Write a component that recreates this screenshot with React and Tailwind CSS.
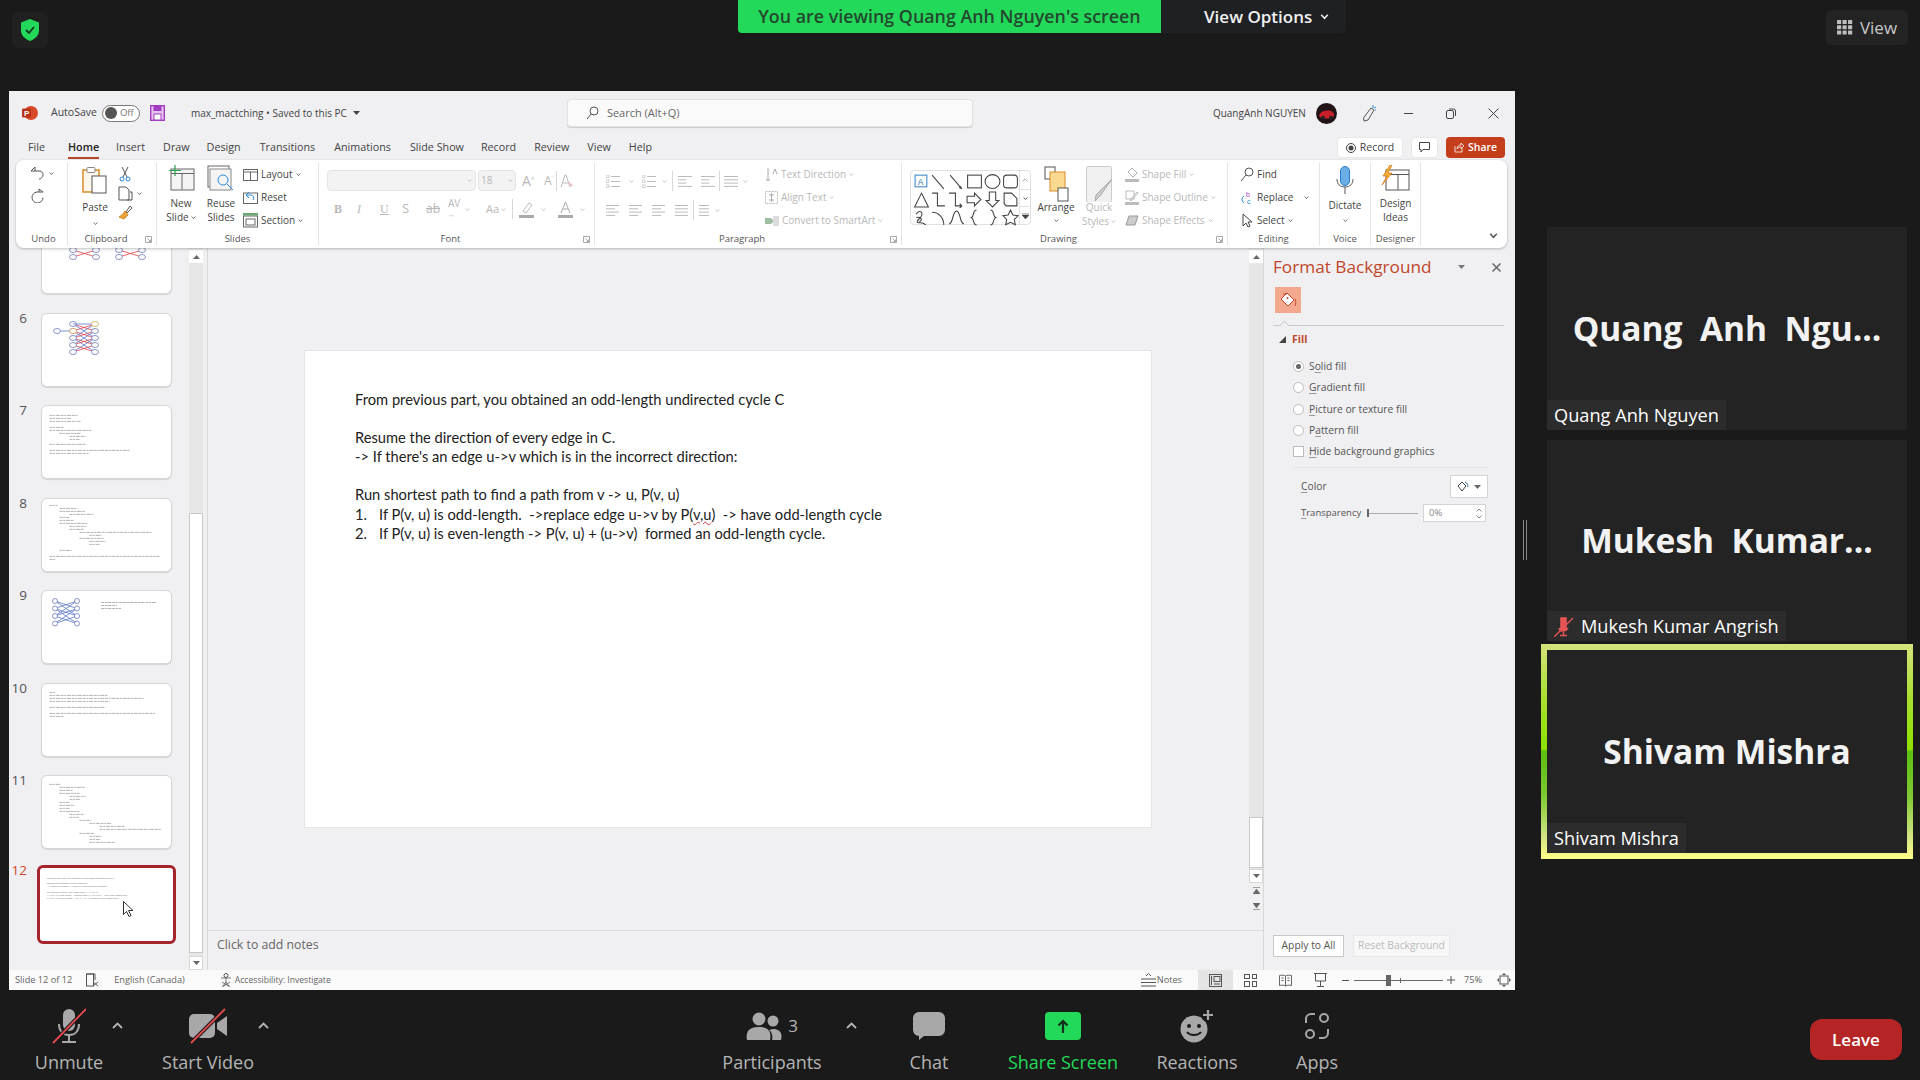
import React from 'react';

const F = "font-['Open_Sans','Noto_Sans',sans-serif]";

const Svg = ({ w, h, vb, className = '', children, ...rest }) => (
  <svg width={w} height={h} viewBox={vb || `0 0 ${w} ${h}`} fill="none" className={'shrink-0 ' + className} {...rest}>{children}</svg>
);
const Chev = ({ c = '#555', s = 6, className = '' }) => (
  <Svg w={s} h={s} vb="0 0 6 6" className={className}><path d="M.8 1.8 3 4.2l2.2-2.4" stroke={c} strokeWidth="1" /></Svg>
);
const Tri = ({ c = '#666', className = '' }) => (
  <Svg w={7} h={4} className={className}><path d="M0 0h7L3.5 4z" fill={c} /></Svg>
);

/* ---------- top bar ---------- */
const TopBar = () => (
  <div className="h-[91px] flex items-start">
    <div className="ml-3 mt-3 w-9 h-9 rounded-md bg-[#202020] flex items-center justify-center">
      <Svg w={18} h={22}>
        <path d="M9 0 18 3.5v8c0 5-4 8.500-9 10.500C4 20 0 16.500 0 11.500v-8z" fill="#23d959" />
        <path d="m5 11 3 3 5-6" stroke="#14351f" strokeWidth="1.800" />
      </Svg>
    </div>
    <div className="ml-[690px] h-[33px] w-[423px] bg-[#23d959] rounded-bl-sm flex items-center justify-center text-[17.850px] font-semibold text-[#24482f] whitespace-nowrap">
      You are viewing Quang Anh Nguyen's screen
    </div>
    <div className="h-[33px] w-[185px] bg-[#1f2023] rounded-br-sm flex items-center pl-[43px] gap-2 text-[17px] font-semibold text-[#f0f0f0] whitespace-nowrap">
      View Options
      <Chev c="#f0f0f0" s={9} />
    </div>
    <div className="ml-auto mr-3 mt-[10px] w-[82px] h-[35px] rounded-md bg-[#232323] flex items-center justify-center gap-[7px] text-[17px] text-[#c8c8c8]">
      <Svg w={16} h={15}>
        {[0, 5.500, 11].map(x => [0, 5.250, 10.500].map(y => <rect key={x + '-' + y} x={x} y={y} width="4.200" height="4" rx=".6" fill="#bdbdbd" />))}
      </Svg>
      View
    </div>
  </div>
);

/* ---------- title bar ---------- */
const TitleBar = () => (
  <div className="h-[44px] flex items-center text-[10px] text-[#444] whitespace-nowrap">
    <Svg w={16} h={16} className="ml-[13px]">
      <circle cx="9" cy="8" r="7" fill="#d8492a" />
      <rect x="0" y="3.500" width="9" height="9" rx="1" fill="#b7341a" />
      <text x="2" y="11" fontSize="8" fontWeight="700" fill="#fff" fontFamily="Liberation Sans">P</text>
    </Svg>
    <span className="ml-[13px] text-[10.500px]">AutoSave</span>
    <div className="ml-[5px] w-[38px] h-[17px] rounded-full border border-[#777] flex items-center pl-[2px] gap-[3px] bg-white text-[9.500px] text-[#777]">
      <div className="w-[12px] h-[12px] rounded-full bg-[#555]" />Off
    </div>
    <Svg w={15} h={16} className="ml-[10px]">
      <rect x=".7" y=".7" width="13.600" height="14.600" fill="#e6c4ef" stroke="#a23cc0" strokeWidth="1.400" />
      <rect x="3.500" y="1" width="8" height="5" fill="#a23cc0" />
      <rect x="4" y="9" width="7" height="6" fill="#fff" stroke="#a23cc0" />
    </Svg>
    <span className="ml-[26px]">max_mactching • Saved to this PC</span>
    <Tri c="#444" className="ml-[6px]" />
    <div className="ml-[207px] w-[406px] h-[28px] rounded bg-[#fafafa] border border-[#e2e2e2] shadow-[0_1px_1px_rgba(0,0,0,.15)] flex items-center pl-[18px] gap-[8px] text-[#666] text-[11px]">
      <Svg w={13} h={14}>
        <circle cx="8" cy="5" r="4" stroke="#555" />
        <path d="M5 8 1 13" stroke="#555" />
      </Svg>
      Search (Alt+Q)
    </div>
    <span className="ml-[240px]">QuangAnh NGUYEN</span>
    <Svg w={21} h={21} className="ml-[10px]">
      <circle cx="10.500" cy="10.500" r="10.500" fill="#231517" />
      <path d="M3 12c2-4 6-5 10-4.500 3 .5 5 2 5 4.500s-3 3.500-7 3.500-7 0-8-3.500" fill="#c7202a" />
      <circle cx="7" cy="14.500" r="1.800" fill="#222" />
      <circle cx="15" cy="14.500" r="1.800" fill="#222" />
    </Svg>
    <Svg w={15} h={18} className="ml-[25px]">
      <path d="M9 4 12 6 6 16l-4 1-.5-3z" stroke="#555" />
      <path d="M11 1v3M14 3l-2 1M14 6h-1" stroke="#2b88d8" />
    </Svg>
    <div className="ml-[27px] w-[9px] h-px bg-[#444]" />
    <Svg w={10} h={11} className="ml-[33px]">
      <rect x=".5" y="2.500" width="7" height="8" rx="1.500" stroke="#444" />
      <path d="M3 1h4.500A2 2 0 0 1 9.500 3v5" stroke="#444" />
    </Svg>
    <Svg w={11} h={11} className="ml-[32px]"><path d="m.5.5 10 10m0-10-10 10" stroke="#444" /></Svg>
  </div>
);

/* ---------- tabs ---------- */
const tabs = [['File', 19], ['Home', 23], ['Insert', 17], ['Draw', 18], ['Design', 17], ['Transitions', 19], ['Animations', 19], ['Slide Show', 19], ['Record', 17], ['Review', 18], ['View', 18], ['Help', 18]];
const TabsRow = () => (
  <div className="h-[25px] flex items-center text-[10.750px] text-[#444] whitespace-nowrap">
    {tabs.map(([t, m]) => (
      <div key={t} style={{ marginLeft: m }} className={t === 'Home' ? 'relative h-full flex items-center text-[#222] font-semibold' : ''}>
        {t}
        {t === 'Home' && <div className="absolute left-0 right-0 bottom-[1px] h-[2px] bg-[#b7472a]" />}
      </div>
    ))}
    <div className="ml-auto h-[21px] w-[66px] bg-white rounded border border-[#e8e8e8] flex items-center justify-center gap-[4px] text-[10.500px]">
      <Svg w={10} h={10}><circle cx="5" cy="5" r="4.500" stroke="#444" /><circle cx="5" cy="5" r="2.500" fill="#444" /></Svg>
      Record
    </div>
    <div className="ml-[8px] w-[27px] h-[21px] bg-white rounded border border-[#e8e8e8] flex items-center justify-center">
      <Svg w={11} h={11}><path d="M.5.5h10v7H4L2 10V7.500H.5z" stroke="#444" /></Svg>
    </div>
    <div className="ml-[8px] mr-[10px] w-[59px] h-[21px] bg-[#c43e1c] rounded flex items-center justify-center gap-[4px] text-[10.500px] font-semibold text-white">
      <Svg w={10} h={11}><path d="M1 4v6h7V6M3 7c0-3 2-4 4-4V1l3 3-3 2.500V5C5 5 4 6 3 7" stroke="#fff" strokeWidth=".8" /></Svg>
      Share
    </div>
  </div>
);

/* ---------- ribbon ---------- */
const launcher = (
  <Svg w={7} h={7} className="absolute right-[4px] top-[3px]">
    <path d="M.5.5h6v6h-6zM2.500 2.500l3 3M5.500 3.500v2h-2" stroke="#888" strokeWidth=".7" />
  </Svg>
);
const Group = ({ w, label, launch, pr = 0, pl = 0, children }) => (
  <div style={{ width: w }} className="h-[82px] mt-[3px] flex flex-col border-r border-[#e3e3e3]">
    <div className="h-[70px] flex">{children}</div>
    <div style={{ paddingRight: pr, paddingLeft: pl }} className="h-[12px] relative flex items-center justify-center text-[9.500px] text-[#555] whitespace-nowrap">
      {label}
      {launch && launcher}
    </div>
  </div>
);
const Row = ({ icon, text, off, chev = true }) => (
  <div className={`h-[23px] flex items-center gap-[3px] whitespace-nowrap text-[10px] ${off ? 'text-[#b8b8b8]' : 'text-[#444]'}`}>
    {icon}
    <span>{text}</span>
    {chev && <Chev c={off ? '#b8b8b8' : '#555'} s={5} />}
  </div>
);
const Lines = ({ c = '#bbb', w = 14, n = 3, sh = [1, 1, 1, 1] }) => (
  <Svg w={w} h={11}>
    {Array.from({ length: n + 1 }).map((_, i) => <rect key={i} x="0" y={i * 3.300} width={w * sh[i]} height="1" fill={c} />)}
  </Svg>
);
const Bullets = ({ c = '#bbb' }) => (
  <Svg w={14} h={13}>
    {[1, 6, 11].map(y => <g key={y}><rect x="0" y={y - 1} width="3" height="2.500" stroke={c} strokeWidth=".7" /><rect x="5" y={y} width="9" height="1" fill={c} /></g>)}
  </Svg>
);
const Sep = ({ h = 20, m = 6 }) => <div style={{ height: h, marginLeft: m, marginRight: m }} className="w-px bg-[#d8d8d8]" />;

const shapes = [
  <g><rect x="2" y="2" width="11" height="11" stroke="#3a86c8" /><text x="4.500" y="11" fontSize="8" fill="#2b6fa8" fontFamily="Liberation Sans">A</text></g>,
  <path d="m2 2 11 13" stroke="#444" />,
  <g><path d="m2 2 11 13" stroke="#444" /><path d="m13 15-3-1 2-2z" fill="#444" /></g>,
  <rect x="1.500" y="2" width="13" height="12" stroke="#444" />,
  <ellipse cx="8" cy="8" rx="7" ry="6.500" stroke="#444" />,
  <rect x="1.500" y="2" width="13" height="12" rx="3" stroke="#444" />,
  <path d="M8 2 1.500 15h13z" stroke="#444" />,
  <path d="M2 2h5v12h7" stroke="#444" />,
  <path d="M1 2h6v12h6m-2-2 2 2-2 2" stroke="#444" />,
  <path d="M1 5h7V2l6 6-6 6v-3H1z" stroke="#444" />,
  <path d="M5 1h6v8h3l-6 6-6-6h3z" stroke="#444" />,
  <path d="M2 2h7l5 5v7H4l-2-2z" stroke="#444" />,
  <path d="M3 5c3-5 8-2 4 3-3 3-5 5 0 5 2 0 4 1 5 2M3 8c4-1 7 2 3 4" stroke="#444" />,
  <path d="M2 3c6 0 11 5 11 12" stroke="#444" />,
  <path d="M1 14C5 14 4 2 8 2s3 12 7 12" stroke="#444" />,
  <path d="M10 1C6 1 8 7 5 8c3 1 1 7 5 7" stroke="#444" />,
  <path d="M6 1c4 0 2 6 5 7-3 1-1 7-5 7" stroke="#444" />,
  <path d="m8 1 2.200 4.600 5 .7-3.600 3.500.9 5L8 12.500l-4.500 2.300.9-5L.8 6.300l5-.7z" stroke="#444" />,
];

const Ribbon = () => (
  <div className="ml-[7px] w-[1491px] h-[88px] bg-white rounded-lg shadow-[0_1px_3px_rgba(0,0,0,.25)] flex relative z-10">
    <Group w={52} label="Undo" pl={4}>
      <div className="pl-[14px] pt-[3px] flex flex-col gap-[8px]">
        <div className="flex items-center gap-[4px]">
          <Svg w={15} h={14}><path d="M5 1 1 5h8c3 0 4 2 4 4s-2 4-4 4M5 1v4" stroke="#555" /></Svg><Chev s={5} />
        </div>
        <Svg w={15} h={15}><path d="M9 1 13 4H7a5.500 5.500 0 1 0 6 5.500M9 1v3" stroke="#555" /></Svg>
      </div>
    </Group>
    <Group w={89} label="Clipboard" launch pr={12}>
      <div className="pl-[14px] w-[40px] flex flex-col items-center text-[10px] text-[#444]">
        <Svg w={26} h={28} className="mt-[3px]">
          <rect x="1" y="4" width="16" height="22" stroke="#d98b2b" strokeWidth="1.500" fill="#fdf6ea" />
          <rect x="5" y="1.500" width="8" height="5" rx="1" stroke="#888" fill="#fff" />
          <rect x="10" y="10" width="14" height="17" stroke="#555" fill="#fff" />
        </Svg>
        <span className="mt-[6px]">Paste</span>
        <Chev s={5} className="mt-[6px]" />
      </div>
      <div className="ml-[10px] pt-[3px] flex flex-col gap-[4px]">
        <Svg w={12} h={16} className="ml-[1px]"><path d="M3 1l5 10M9 1 4 11" stroke="#555" /><circle cx="3" cy="13" r="2" stroke="#2b88d8" /><circle cx="9" cy="13" r="2" stroke="#2b88d8" /></Svg>
        <div className="flex items-center gap-[4px]">
          <Svg w={15} h={15}><path d="M1 1h7l3 3v10H1z" stroke="#555" /><path d="M12 6h2v8H9" stroke="#555" /></Svg><Chev s={5} />
        </div>
        <Svg w={15} h={15}><path d="m8 7 4-6 2 2-5 5z" stroke="#555" /><path d="m7 6 3 4-4 4-5-2c2-1 4-3 6-6" fill="#eda33a" stroke="#d98b2b" /></Svg>
      </div>
    </Group>
    <Group w={162} label="Slides">
      <div className="ml-[8px] w-[32px] flex flex-col items-center text-[10px] text-[#444] leading-[14px]">
        <Svg w={27} h={26} className="mt-[2px]">
          <rect x="3" y="4" width="23" height="21" stroke="#666" fill="#f4f4f4" />
          <path d="M3 8.500h23M14 8.500v16" stroke="#666" />
          <path d="M7 0v11M1 5.500h12" stroke="#2da54a" strokeWidth="1.200" />
        </Svg>
        <span className="mt-[5px]">New</span>
        <div className="flex items-center gap-[2px]">Slide<Chev s={5} /></div>
      </div>
      <div className="ml-[8px] w-[32px] flex flex-col items-center text-[10px] text-[#444] leading-[14px]">
        <Svg w={28} h={26} className="mt-[2px]">
          <rect x="1" y="1" width="21" height="21" stroke="#666" fill="#fff" />
          <rect x="3" y="4" width="21" height="21" stroke="#888" fill="#f4f4f4" />
          <circle cx="16" cy="15" r="5" stroke="#2b88d8" />
          <path d="m20 19 6 6" stroke="#2b88d8" />
        </Svg>
        <span className="mt-[5px]">Reuse</span>
        <span>Slides</span>
      </div>
      <div className="ml-[6px]">
        <Row text="Layout" icon={<Svg w={15} h={12}><rect x=".5" y=".5" width="14" height="11" stroke="#666" /><path d="M.5 3h14M7.500 3v8" stroke="#666" /></Svg>} />
        <Row text="Reset" chev={false} icon={<Svg w={15} h={13}><rect x=".5" y="2" width="14" height="10.500" stroke="#666" /><path d="M6 1 3 4l3 3M3 4h5a3 3 0 0 1 2 5" stroke="#2b88d8" /></Svg>} />
        <Row text="Section" icon={<Svg w={15} h={15}><rect x=".5" y="3" width="14" height="11" stroke="#666" /><rect x="0" y="0" width="15" height="2.500" fill="#6aa874" /><rect x="3" y="6" width="9" height="6" stroke="#666" /></Svg>} />
      </div>
    </Group>
    <Group w={276} label="Font" launch pr={12}>
      <div className="pl-[8px] pt-[7px] text-[#b8b8b8]">
        <div className="flex items-center">
          <div className="w-[149px] h-[21px] bg-[#f3f3f3] border border-[#e4e4e4] rounded flex items-center justify-end pr-[3px]"><Chev c="#bbb" s={5} /></div>
          <div className="ml-[2px] w-[38px] h-[21px] bg-[#f3f3f3] border border-[#e4e4e4] rounded flex items-center justify-between px-[2px] text-[10px]">18<Chev c="#bbb" s={5} /></div>
          <span className="ml-[6px] text-[14px] leading-none">A<sup className="text-[7px]">^</sup></span>
          <span className="ml-[9px] text-[12px] leading-none">A<sup className="text-[7px]">˅</sup></span>
          <Sep m={3} />
          <Svg w={15} h={15}><path d="M1 14 5 2h1l4 12M3 10h5" stroke="#bbb" /><path d="m9 9 4 3-2 2-3-3z" fill="#e6c6c6" /></Svg>
        </div>
        <div className="flex items-center mt-[8px] text-[12px] h-[20px] pl-[7px]">
          <b className="w-[23px] font-['Liberation_Serif',serif]">B</b>
          <i className="w-[23px] font-['Liberation_Serif',serif]">I</i>
          <u className="w-[22px] font-['Liberation_Serif',serif]">U</u>
          <span className="w-[24px] text-[13px]">S</span>
          <s className="w-[22px]">ab</s>
          <span className="text-[10px] leading-[10px] w-[17px]">AV<br /><span className="text-[7px]">↔</span></span>
          <Chev c="#bbb" s={5} />
          <span className="ml-[16px] text-[11px]">Aa</span>
          <Chev c="#bbb" s={5} className="ml-[2px]" />
          <Sep m={6} />
          <Svg w={15} h={17}><path d="m4 10 6-8 3 2-6 8z" stroke="#bbb" /><rect y="14" width="15" height="3" fill="#aaa" /></Svg>
          <Chev c="#bbb" s={5} className="ml-[7px]" />
          <Svg w={15} h={17} className="ml-[12px]"><path d="m3 12 4.500-11L12 12M5 8h5" stroke="#aaa" /><rect y="14" width="15" height="3" fill="#aaa" /></Svg>
          <Chev c="#bbb" s={5} className="ml-[7px]" />
        </div>
      </div>
    </Group>
    <Group w={307} label="Paragraph" launch pr={12}>
      <div className="pl-[11px] pt-[8px] w-[170px]">
        <div className="flex items-center h-[20px]">
          <Bullets /><Chev c="#bbb" s={5} className="ml-[9px]" />
          <div className="w-[8px]" /><Bullets /><Chev c="#bbb" s={5} className="ml-[6px]" />
          <Sep h={20} m={5} />
          <Lines w={14} sh={[1, .6, .6, 1]} />
          <div className="w-[9px]" />
          <Lines w={14} sh={[1, .6, .6, 1]} />
          <Sep h={20} m={4} />
          <Lines w={14} /><Chev c="#bbb" s={5} className="ml-[5px]" />
        </div>
        <div className="flex items-center h-[20px] mt-[9px]">
          <Lines w={13} sh={[1, .7, 1, .7]} />
          <div className="w-[10px]" /><Lines w={13} sh={[1, .7, 1, .7]} />
          <div className="w-[10px]" /><Lines w={13} sh={[1, .7, 1, .7]} />
          <div className="w-[10px]" /><Lines w={13} />
          <Sep h={20} m={5} />
          <Lines w={11} sh={[.9, .9, .9, .9]} /><Chev c="#bbb" s={5} className="ml-[5px]" />
        </div>
      </div>
      <div className="">
        <Row off text="Text Direction" icon={<Svg w={13} h={15}><path d="M3 1v13m-2-2 2 2 2-2" stroke="#aaa" /><path d="M8 7l2-5 2 5" stroke="#aaa" /></Svg>} />
        <Row off text="Align Text" icon={<Svg w={13} h={13}><rect x=".5" y=".5" width="12" height="12" stroke="#bbb" strokeDasharray="2 1" /><path d="M6.500 2v9M4 4h5M4 9h5" stroke="#aaa" /></Svg>} />
        <Row off text="Convert to SmartArt" icon={<Svg w={14} h={12}><path d="M0 3h6l3 3-3 3H0z" fill="#9dbfa4" /><rect x="8" y="1" width="6" height="10" fill="#ddd" /></Svg>} />
      </div>
    </Group>
    <Group w={326} label="Drawing" launch pr={12}>
      <div className="ml-[8px] mt-[7px] w-[121px] h-[55px] rounded border border-[#e1e1e1] flex">
        <div className="w-[108px] grid grid-cols-6 pt-[1px] pl-[1px]">
          {shapes.map((s, i) => <Svg key={i} w={17} h={17} vb="0 0 16 16" className="m-[0.500px]">{s}</Svg>)}
        </div>
        <div className="flex-1 border-l border-[#e1e1e1] flex flex-col items-center text-[#888]">
          <div className="h-[18px] flex items-center"><Svg w={6} h={4}><path d="m.5 3.500L3 1l2.500 2.500" stroke="#aaa" /></Svg></div>
          <div className="h-[18px] w-full border-y border-[#e1e1e1] flex items-center justify-center"><Chev c="#444" s={5} /></div>
          <div className="h-[17px] flex items-center"><Svg w={7} h={6}><path d="M0 0h7M0 2h7L3.500 6z" stroke="#444" strokeWidth=".6" fill="#444" /></Svg></div>
        </div>
      </div>
      <div className="ml-[6px] w-[38px] flex flex-col items-center text-[10px] text-[#444] leading-[14px]">
        <Svg w={26} h={36} vb="0 0 26 36" className="mt-[3px]">
          <rect x="2" y="1" width="10" height="12" stroke="#555" fill="#fff" />
          <rect x="7" y="6" width="15" height="19" stroke="#d98b2b" fill="#fbd990" />
          <rect x="15" y="22" width="10" height="13" stroke="#555" fill="#fff" />
        </Svg>
        <span className="-mt-[2px]">Arrange</span>
        <Chev s={5} className="mt-[4px]" />
      </div>
      <div className="ml-[6px] w-[36px] flex flex-col items-center text-[10px] text-[#b8b8b8] leading-[14px]">
        <Svg w={27} h={36} className="mt-[3px]">
          <rect x=".5" y=".5" width="25" height="36" rx="2" stroke="#ccc" fill="#f0f0f0" />
          <path d="M26 13 14 30l-5 5 1-6z" fill="#ccc" stroke="#aaa" />
        </Svg>
        <span className="-mt-[2px]">Quick</span>
        <div className="flex items-center gap-[2px]">Styles<Chev c="#bbb" s={5} /></div>
      </div>
      <div className="ml-[8px]">
        <Row off text="Shape Fill" icon={<Svg w={14} h={15}><path d="m7 1 5 5-4 4-5-5z" stroke="#aaa" /><rect y="12" width="14" height="3" fill="#bbb" /></Svg>} />
        <Row off text="Shape Outline" icon={<Svg w={14} h={15}><path d="M1 1h8v8H1zM5 10l7-8 1 1-7 8z" stroke="#bbb" /><rect y="12" width="14" height="3" fill="#bbb" /></Svg>} />
        <Row off text="Shape Effects" icon={<Svg w={14} h={13}><path d="M4 2h9l-3 9H1z" fill="#ccc" stroke="#999" /></Svg>} />
      </div>
    </Group>
    <Group w={92} label="Editing">
      <div className="pl-[12px]">
        <Row text="Find" chev={false} icon={<Svg w={14} h={15}><circle cx="9" cy="5" r="4" stroke="#555" /><path d="M6 8 1 14" stroke="#555" /></Svg>} />
        <Row text={<span className="mr-[8px]">Replace</span>} icon={<Svg w={14} h={14}><path d="M4 5a4 4 0 0 0 0 7" stroke="#2b88d8" /><text x="6" y="6" fontSize="7" fill="#b146c2" fontFamily="Liberation Sans">b</text><text x="7" y="13" fontSize="7" fill="#2b88d8" fontFamily="Liberation Sans">c</text></Svg>} />
        <Row text="Select" icon={<Svg w={14} h={15}><path d="M3 1v12l3-3 2 4 2-1-2-4h4z" stroke="#444" /></Svg>} />
      </div>
    </Group>
    <Group w={51} label="Voice">
      <div className="w-full flex flex-col items-center text-[10px] text-[#444]">
        <Svg w={18} h={29} className="mt-[3px]">
          <rect x="4.500" y=".5" width="9" height="19" rx="4.500" fill="#6aaee8" stroke="#2b7cc8" />
          <path d="M1 13c0 5 3 8 8 8s8-3 8-8M9 21v7" stroke="#555" />
        </Svg>
        <span className="mt-[3px]">Dictate</span>
        <Chev s={5} className="mt-[5px]" />
      </div>
    </Group>
    <Group w={50} label="Designer">
      <div className="w-full flex flex-col items-center text-[10px] text-[#444] leading-[14px]">
        <Svg w={30} h={26} className="mt-[2px]">
          <rect x="5" y="5" width="23" height="20" stroke="#555" fill="#fff" />
          <path d="M5 9.500h23M17 9.500v15" stroke="#555" />
          <path d="M9 0 2 11h4L1 20l10-12H7l4-8z" fill="#f2b233" stroke="#d6701c" strokeWidth=".7" />
        </Svg>
        <span className="mt-[5px]">Design</span>
        <span>Ideas</span>
      </div>
    </Group>
    <div className="flex-1 flex items-end justify-end pr-[9px] pb-[8px]"><Chev c="#555" s={9} /></div>
  </div>
);

/* ---------- thumbnails ---------- */
const Graph = ({ rows, x1, x2, y0, dy, rx = 3.500, ry = 2.500, red = true, extra }) => {
  const ys = Array.from({ length: rows }, (_, i) => y0 + i * dy);
  const pairs = [];
  ys.forEach((a, i) => ys.forEach((b, j) => { const d = Math.abs(i - j); if (d === 1 || d === 2) pairs.push([a, b, d === 1]); }));
  return (
    <g>
      {pairs.map(([a, b, isR], i) => <path key={i} d={`M${x1} ${a}L${x2} ${b}`} stroke={red && isR ? '#e0404a' : '#5c78c8'} strokeWidth=".8" />)}
      {ys.map(y => <ellipse key={'l' + y} cx={x1} cy={y} rx={rx} ry={ry} fill="#fff" stroke="#5a6ab0" strokeWidth=".7" />)}
      {ys.map(y => <ellipse key={'r' + y} cx={x2} cy={y} rx={rx} ry={ry} fill="#fff" stroke="#5a6ab0" strokeWidth=".7" />)}
      {extra}
    </g>
  );
};
const TextLines = ({ lines }) => (
  <svg viewBox="0 0 130 74" width="131" height="74" className="block">
    {lines.map(([x, y, w], i) => <path key={i} d={`M${x} ${y + .4}h${w}`} stroke="#a0a0a0" strokeWidth=".8" strokeDasharray="3 .7 2 .7 4 .7" />)}
  </svg>
);
const T7 = [[7, 9, 28], [7, 12, 22], [7, 15, 31], [7, 21, 14], [7, 24, 42], [17, 27, 21], [27, 30, 16], [27, 33, 10], [7, 38, 36], [7, 44, 80], [7, 47, 40]];
const T8 = [[7, 6, 8], [17, 9, 18], [17, 12, 26], [27, 15, 24], [17, 18, 10], [17, 21, 14], [17, 24, 28], [27, 27, 17], [27, 30, 14], [37, 33, 72], [47, 36, 12], [37, 39, 24], [47, 42, 16], [47, 45, 10], [17, 51, 12], [7, 57, 110], [7, 60, 6]];
const T10 = [[7, 8, 6], [7, 11, 58], [7, 14, 94], [7, 17, 60], [7, 23, 56], [7, 29, 106], [7, 32, 14]];
const T11 = [[7, 8, 11], [17, 11, 25], [17, 14, 13], [17, 17, 20], [27, 20, 16], [27, 23, 11], [17, 26, 10], [17, 29, 15], [17, 32, 10], [17, 35, 20], [27, 38, 15], [27, 41, 9], [37, 44, 12], [47, 47, 22], [57, 50, 25], [57, 53, 62], [37, 57, 15], [47, 60, 12], [47, 63, 11], [47, 66, 26], [7, 72, 30]];

const Thumb = ({ n, children, clip, sel }) => (
  <div className={`flex items-start ${clip ? 'h-[46px]' : ''}`}>
    <div className={`w-[18px] text-right text-[13.500px] leading-[14px] -mt-[2px] ${sel ? 'text-[#d24726]' : 'text-[#555]'}`}>{n}</div>
    <div className={sel
      ? 'relative ml-[10px] w-[139px] h-[79px] bg-white border-[3px] border-[#a4262c] rounded-md p-[1px]'
      : `ml-[14px] w-[131px] ${clip ? 'h-[46px]' : 'h-[74px]'} bg-white border border-[#d6d6d6] ${clip ? 'border-t-0 rounded-b-md' : 'rounded-md'} shadow-[0_1px_1px_rgba(0,0,0,.12)] overflow-hidden`}>
      {children}
    </div>
  </div>
);

const SlideText12 = () => (
  <div className="pl-[6px] pt-[8px] text-[2.300px] leading-[2.900px] text-[#777] whitespace-nowrap font-['Lato',sans-serif]">
    <div>From previous part, you obtained an odd-length undirected cycle C</div><br />
    <div>Resume the direction of every edge in C.</div>
    <div>-&gt; If there's an edge u-&gt;v which is in the incorrect direction:</div><br />
    <div>Run shortest path to find a path from v -&gt; u, P(v, u)</div>
    <div>1. If P(v, u) is odd-length. -&gt;replace edge u-&gt;v by P(v,u) -&gt; have odd-length cycle</div>
    <div>2. If P(v, u) is even-length -&gt; P(v, u) + (u-&gt;v) formed an odd-length cycle.</div>
  </div>
);

const ThumbPane = () => (
  <div className="w-[198px] flex bg-[#f0eff2]">
    <div className="w-[180px] flex flex-col gap-[18.500px]">
      <Thumb clip>
        <svg width="130" height="46">
          <Graph rows={2} x1={31} x2={54} y0={2} dy={7} />
          <Graph rows={2} x1={77} x2={100} y0={2} dy={7} />
        </svg>
      </Thumb>
      <Thumb n="6">
        <svg width="130" height="74">
          <path d="M15 17H31" stroke="#5c78c8" strokeWidth=".8" />
          <ellipse cx="15" cy="17" rx="3.500" ry="2.500" fill="#fff" stroke="#5a6ab0" strokeWidth=".7" />
          <Graph rows={5} x1={31} x2={53} y0={10} dy={7} extra={<g><path d="M31 10H53" stroke="#5c78c8" strokeWidth=".8" /><ellipse cx="53" cy="10" rx="3.500" ry="2.500" fill="#fff" stroke="#e8c65a" strokeWidth=".8" /><ellipse cx="31" cy="17" rx="3.500" ry="2.500" fill="#fff" stroke="#e8a65a" strokeWidth=".8" /></g>} />
        </svg>
      </Thumb>
      <Thumb n="7"><TextLines lines={T7} /></Thumb>
      <Thumb n="8"><TextLines lines={T8} /></Thumb>
      <Thumb n="9">
        <svg width="130" height="74">
          <Graph rows={4} x1={13} x2={35} y0={10} dy={7.500} rx={2.500} ry={2.500} red={false} />
          <path d="M59 11.500h55M59 14.500h16M59 17.500h20" stroke="#a0a0a0" strokeWidth=".8" strokeDasharray="3 .7 2 .7 4 .7" />
        </svg>
      </Thumb>
      <Thumb n="10"><TextLines lines={T10} /></Thumb>
      <Thumb n="11"><TextLines lines={T11} /></Thumb>
      <div className="-mt-[3px]">
        <Thumb n="12" sel>
          <SlideText12 />
          <Svg w={11} h={16} className="absolute left-[83px] top-[33px]"><path d="M.5.5v13l3-3 2.500 5 2-1-2.500-5H10z" fill="#fff" stroke="#333" /></Svg>
        </Thumb>
      </div>
    </div>
    <Scroll thumbTop={265} thumbH={440} h={722} />
  </div>
);

function Scroll({ h, thumbTop, thumbH, nav }) {
  return (
    <div style={{ height: h }} className="w-[14px] flex flex-col bg-[#e6e6e6]">
      <div className="h-[13px] mt-[2px] bg-white flex items-center justify-center"><Svg w={7} h={4}><path d="M0 4h7L3.500 0z" fill="#666" /></Svg></div>
      <div style={{ height: thumbTop - 15 }} />
      <div style={{ height: thumbH }} className="bg-white border border-[#c8c8c8]" />
      <div className="flex-1" />
      <div className="h-[14px] bg-white border border-[#d8d8d8] flex items-center justify-center"><Tri /></div>
      {nav && (
        <div className="h-[47px] bg-[#f0eff2] flex flex-col items-center pt-[4px] gap-[9px]">
          <Svg w={7} h={7}><path d="M0 .5h7M0 7l3.500-5L7 7z" stroke="#666" strokeWidth=".6" fill="#666" /></Svg>
          <Svg w={7} h={7}><path d="M0 6.500h7M0 0l3.500 5L7 0z" stroke="#666" strokeWidth=".6" fill="#666" /></Svg>
        </div>
      )}
    </div>
  );
}

/* ---------- centre ---------- */
const Slide = () => (
  <div className="w-[848px] h-[478px] bg-white border border-[#e4e4e4] pl-[50px] pt-[39px] font-['Lato',sans-serif] text-[14.700px] leading-[19.100px] text-[#222] whitespace-pre">
    <div>From previous part, you obtained an odd-length undirected cycle C</div>
    <div>&nbsp;</div>
    <div>Resume the direction of every edge in C.</div>
    <div>-&gt; If there's an edge u-&gt;v which is in the incorrect direction:</div>
    <div>&nbsp;</div>
    <div>Run shortest path to find a path from v -&gt; u, P(v, u)</div>
    <div className="flex"><span className="w-[24px]">1.</span><span>If P(v, u) is odd-length.  -&gt;replace edge u-&gt;v by P(<span className="underline decoration-wavy decoration-[#d04040] decoration-1">v,u</span>)  -&gt; have odd-length cycle</span></div>
    <div className="flex"><span className="w-[24px]">2.</span><span>If P(v, u) is even-length -&gt; P(v, u) + (u-&gt;v)  formed an odd-length cycle.</span></div>
  </div>
);

const Centre = () => (
  <div className="w-[1056px] flex flex-col border-l border-[#d8d8d8]">
    <div className="h-[682px] flex">
      <div className="w-[1041px] pl-[96px] pt-[102px]"><Slide /></div>
      <Scroll h={682} thumbTop={569} thumbH={51} nav />
    </div>
    <div className="h-[40px] border-t border-[#dcdcdc] pl-[9px] pb-[11px] flex items-center text-[12.300px] text-[#666]">Click to add notes</div>
  </div>
);

/* ---------- format pane ---------- */
const Radio = ({ on, children }) => (
  <div className="h-[21.300px] flex items-center text-[10.300px] text-[#555]">
    <div className="w-[11px] h-[11px] rounded-full border border-[#bbb] bg-white flex items-center justify-center">
      {on && <div className="w-[5px] h-[5px] rounded-full bg-[#666]" />}
    </div>
    <span className="ml-[5px]">{children}</span>
  </div>
);
const U = ({ children }) => <span className="underline underline-offset-2 decoration-[#999]">{children}</span>;

const FormatPane = () => (
  <div className="flex-1 border-l border-[#d8d8d8] flex flex-col pl-[9px] pr-[10px] text-[#555]">
    <div className="h-[39px] pb-[1px] flex items-center text-[17.200px] text-[#c0462a] whitespace-nowrap">
      Format Background
      <Tri c="#777" className="ml-[26px]" />
      <Svg w={9} h={9} className="ml-[27px]"><path d="m.5.5 8 8m0-8-8 8" stroke="#666" strokeWidth="1.500" /></Svg>
    </div>
    <div className="ml-[2px] w-[26px] h-[26px] bg-[#f4a98e] flex items-center justify-center">
      <Svg w={18} h={18}>
        <path d="m8 2 7 7-6 6-7-7z" fill="#fff" stroke="#c0462a" />
        <path d="M4 3h4M16 8c1 2 1 5 0 7" stroke="#c0462a" />
        <circle cx="8.500" cy="7" r="1" fill="#c0462a" />
      </Svg>
    </div>
    <div className="relative mt-[12px] h-px bg-[#c8c8c8] mr-[1px]">
      <div className="absolute left-[8px] -top-[3px] w-[7px] h-[7px] rotate-45 bg-[#f0eff2] border-l border-t border-[#d0d0d0]" />
    </div>
    <div className="mt-[7px] flex items-center pl-[6px] h-[13px]">
      <Svg w={7} h={7}><path d="M7 0v7H0z" fill="#444" /></Svg>
      <span className="ml-[6px] text-[10.500px] font-bold text-[#c0462a]">Fill</span>
    </div>
    <div className="pl-[20px] mt-[10px] whitespace-nowrap">
      <Radio on>S<U>o</U>lid fill</Radio>
      <Radio><U>G</U>radient fill</Radio>
      <Radio><U>P</U>icture or texture fill</Radio>
      <Radio>P<U>a</U>ttern fill</Radio>
      <div className="h-[21px] flex items-center text-[10.300px]">
        <div className="w-[11px] h-[11px] border border-[#bbb] bg-white" />
        <span className="ml-[5px]"><U>H</U>ide background graphics</span>
      </div>
    </div>
    <div className="ml-[20px] mr-[17px] mt-[5px] h-px bg-[#e2e2e2]" />
    <div className="ml-[28px] mt-[7px] flex items-center h-[23px] text-[10.300px]">
      <span><U>C</U>olor</span>
      <div className="ml-auto mr-[17px] w-[38px] h-[23px] bg-white border border-[#d4d4d4] flex items-center justify-center gap-[5px]">
        <Svg w={12} h={11}><path d="m5 1 4 4-4 5-4-5z" stroke="#444" /><path d="M8 1c2 1 3 3 3 5" stroke="#2b6fa8" /></Svg>
        <Tri />
      </div>
    </div>
    <div className="ml-[28px] mt-[6px] flex items-center h-[18px] text-[9.500px]">
      <span className="w-[66px]"><U>T</U>ransparency</span>
      <div className="w-[51px] relative h-px bg-[#aaa]">
        <div className="absolute left-0 -top-[4px] w-[2px] h-[8px] bg-[#666]" />
      </div>
      <div className="ml-[5px] w-[63px] h-[18px] bg-white border border-[#d4d4d4] flex items-center justify-between pl-[5px] pr-[3px] text-[9.500px] text-[#888]">
        0%
        <div className="flex flex-col gap-[3px]">
          <Svg w={6} h={4}><path d="m.5 3.500L3 1l2.500 2.500" stroke="#888" /></Svg>
          <Svg w={6} h={4}><path d="m.5.5L3 3l2.500-2.500" stroke="#888" /></Svg>
        </div>
      </div>
    </div>
    <div className="mt-auto mb-[13px] flex gap-[9px] text-[10.300px] whitespace-nowrap">
      <div className="w-[71px] h-[22px] bg-white border border-[#c8c8c8] flex items-center justify-center text-[#555]">Apply to All</div>
      <div className="w-[97px] h-[22px] bg-[#f7f7f7] border border-[#e8e8e8] flex items-center justify-center text-[#bbb]">Reset Background</div>
    </div>
  </div>
);

/* ---------- status bar ---------- */
const StatusBar = () => (
  <div className="h-[20px] bg-[#fafafa] flex items-center text-[9.200px] text-[#666] whitespace-nowrap">
    <span className="ml-[6px]">Slide 12 of 12</span>
    <Svg w={13} h={14} className="ml-[14px]"><rect x=".5" y="1" width="7" height="12" stroke="#555" /><path d="M1 1h8v6M7 9l5 4m0-4-5 4" stroke="#555" /></Svg>
    <span className="ml-[15px]">English (Canada)</span>
    <Svg w={12} h={14} className="ml-[35px]"><circle cx="6" cy="2.500" r="2" stroke="#555" /><path d="M1 5h10M6 5v4M3 13l3-4 3 4M2 9l8 5m0-5-8 5" stroke="#555" strokeWidth=".8" /></Svg>
    <span className="ml-[3px] text-[8.600px]">Accessibility: Investigate</span>
    <Svg w={15} h={15} className="ml-auto"><path d="m5 3 2.500-2.500L10 3M0 6h15M0 9.500h15M0 13h15" stroke="#555" /></Svg>
    <span className="ml-[1px] mr-[16px]">Notes</span>
    <div className="w-[35px] h-[20px] bg-[#e4e4e4] flex items-center justify-center">
      <Svg w={13} h={13}><rect x=".5" y=".5" width="12" height="12" stroke="#555" /><rect x="5" y="2.500" width="6" height="5" stroke="#555" /><path d="M2.500 2v9M5 10h6" stroke="#555" /></Svg>
    </div>
    <div className="ml-[11px] grid grid-cols-2 gap-[2px]">
      {[0, 1, 2, 3].map(i => <div key={i} className="w-[5.500px] h-[5.500px] border border-[#555]" />)}
    </div>
    <Svg w={13} h={13} className="ml-[22px]"><path d="M6.500 2C5 1 3 1 .5 1.500v10c2.500-.5 4.500-.5 6 .5 1.500-1 3.500-1 6-.5v-10C10 1 8 1 6.500 2zm0 0v10M2.500 4h2M2.500 6.500h2M8.500 4h2M8.500 6.500h2" stroke="#555" strokeWidth=".9" /></Svg>
    <Svg w={13} h={14} className="ml-[22px]"><path d="M0 .5h13M1.500 1v7h10V1M6.500 8v5M3 13.500h7" stroke="#555" /></Svg>
    <div className="ml-[15px] w-[7px] h-px bg-[#555]" />
    <div className="ml-[5px] relative w-[89px] h-px bg-[#666]">
      <div className="absolute left-[32px] -top-[5px] w-[5px] h-[11px] bg-[#666]" />
      <div className="absolute left-[46px] -top-[2px] w-px h-[5px] bg-[#666]" />
    </div>
    <Svg w={8} h={8} className="ml-[4px]"><path d="M4 0v8M0 4h8" stroke="#555" /></Svg>
    <span className="ml-[9px] w-[20px]">75%</span>
    <Svg w={14} h={14} className="ml-[13px] mr-[4px]"><rect x="3" y="3" width="8" height="8" stroke="#555" /><path d="M7 0 5 2h4zM7 14l-2-2h4zM0 7l2-2v4zM14 7l-2-2v4z" fill="#555" /></Svg>
  </div>
);

/* ---------- participants ---------- */
const Tile = ({ big, name, muted, h = 'h-[203px]' }) => (
  <div className={`w-[360px] ${h} bg-[#232323] flex flex-col`}>
    <div className="flex-1 pt-[30px] flex items-center justify-center text-[33.500px] font-bold text-[#f2f2f2] whitespace-pre">{big}</div>
    <div className="h-[30px] pt-[2px] self-start bg-[#2c2c2c] flex items-center px-[7px] text-[18.200px] text-white whitespace-nowrap">
      {muted && (
        <Svg w={20} h={20} className="mr-[7px]">
          <path d="M7 1h5v10H7zM5 11c1 4 7 4 9 0M9.500 15v3M6 18.500h7" stroke="#e65454" strokeWidth="1.600" fill="#e65454" />
          <path d="M0 20 19 1" stroke="#e65454" strokeWidth="1.300" />
        </Svg>
      )}
      {name}
    </div>
  </div>
);

const Panel = () => (
  <div className="w-[372px] pt-[136px] flex flex-col">
    <div className="ml-[6px]"><Tile big="Quang  Anh  Ngu..." name="Quang Anh Nguyen" /></div>
    <div className="ml-[6px] mt-[10px]"><Tile big="Mukesh  Kumar..." name="Mukesh Kumar Angrish" muted h="h-[201px]" /></div>
    <div className="mt-[3px] p-[6px] w-[372px] h-[215px] bg-[linear-gradient(to_bottom,#d6e27c_0%,#a8e030_25%,#8ee000_49%,#5cc010_50%,#7cc830_70%,#d4e484_90%,#ffff88_100%)]">
      <Tile big="Shivam Mishra" name="Shivam Mishra" />
    </div>
  </div>
);

/* ---------- bottom toolbar ---------- */
const G = '#a8a8a8';
const ToolBtn = ({ w, ml, label, green, icon }) => (
  <div style={{ width: w, marginLeft: ml }} className="flex flex-col items-center">
    <div className="mt-[18px] h-[36px] flex items-center justify-center">{icon}</div>
    <div className={`mt-[6px] h-[24px] flex items-center text-[18px] whitespace-nowrap ${green ? 'text-[#23d959]' : 'text-[#b4b4b4]'}`}>{label}</div>
  </div>
);
const Caret = ({ w = 16, ml = 0 }) => (
  <div style={{ width: w, marginLeft: ml }} className="h-[70px] flex items-center justify-center">
    <Svg w={11} h={7}><path d="M1 6l4.500-4.500L10 6" stroke="#b4b4b4" strokeWidth="1.800" /></Svg>
  </div>
);

const Toolbar = () => (
  <div className="h-[90px] flex items-start">
    <ToolBtn w={80} ml={29} label="Unmute" icon={
      <Svg w={34} h={36}>
        <rect x="11" y="1" width="12" height="22" rx="6" fill={G} />
        <path d="M7 16c0 7 4 11 10 11s10-4 10-11M17 27v6M10 34h14" stroke={G} strokeWidth="2" />
        <path d="M1 35 34 1" stroke="#1a1a1a" strokeWidth="4" />
        <path d="M1 35 34 1" stroke="#e6494f" strokeWidth="1.800" />
      </Svg>} />
    <Caret w={16} />
    <ToolBtn w={96} ml={35} label="Start Video" icon={
      <Svg w={40} h={36}>
        <rect x="1" y="6" width="26" height="24" rx="5" fill={G} />
        <path d="M29 15l10-7v20l-10-7z" fill={G} />
        <path d="M3 35 37 1" stroke="#1a1a1a" strokeWidth="4" />
        <path d="M3 35 37 1" stroke="#e6494f" strokeWidth="1.800" />
      </Svg>} />
    <Caret w={14} />
    <ToolBtn w={110} ml={447} label="Participants" icon={
      <div className="flex items-center gap-[6px] text-[17px] text-[#b4b4b4]">
        <Svg w={36} h={29}>
          <circle cx="13" cy="7" r="6.500" fill={G} />
          <circle cx="27" cy="9" r="5.500" fill={G} />
          <path d="M1 28c-2-10 4-13 12-13s13 3 11 13z" fill={G} />
          <path d="M27 17c6 0 10 3 8 11h-9c1-4 0-8-3-10z" fill={G} />
        </Svg>
        3
      </div>} />
    <Caret w={16} ml={16} />
    <ToolBtn w={60} ml={40} label="Chat" icon={
      <Svg w={32} h={28}>
        <path d="M6 0h20a6 6 0 0 1 6 6v12a6 6 0 0 1-6 6H11l-5 4v-4a6 6 0 0 1-6-6V6a6 6 0 0 1 6-6z" fill={G} />
      </Svg>} />
    <ToolBtn w={110} ml={49} label="Share Screen" green icon={
      <div className="w-[36px] h-[28px] rounded-[4px] bg-[#23d959] flex items-center justify-center">
        <Svg w={12} h={15}><path d="M6 14V2M1.500 6.500 6 2l4.500 4.500" stroke="#12301c" strokeWidth="2.200" /></Svg>
      </div>} />
    <ToolBtn w={90} ml={34} label="Reactions" icon={
      <Svg w={34} h={33}>
        <ellipse cx="14" cy="19" rx="13.500" ry="13.500" fill={G} />
        <circle cx="9" cy="16" r="2" fill="#1a1a1a" /><circle cx="19" cy="16" r="2" fill="#1a1a1a" />
        <path d="M7 22c3 4 11 4 14 0" stroke="#1a1a1a" strokeWidth="2" />
        <circle cx="28" cy="5" r="7" fill="#1a1a1a" />
        <path d="M28 0v10M23 5h10" stroke={G} strokeWidth="2.200" />
      </Svg>} />
    <ToolBtn w={60} ml={45} label="Apps" icon={
      <Svg w={26} h={28}>
        <path d="M11 2H7a5 5 0 0 0-5 5v4M15 26h4a5 5 0 0 0 5-5v-4" stroke={G} strokeWidth="2" />
        <circle cx="20" cy="6" r="4" stroke={G} strokeWidth="2" />
        <circle cx="6" cy="22" r="4" stroke={G} strokeWidth="2" />
      </Svg>} />
    <div className="ml-auto mr-[18px] mt-[29px] w-[92px] h-[41px] rounded-xl bg-[#b52525] flex items-center justify-center text-[17px] font-semibold text-white">Leave</div>
  </div>
);

export default function App() {
  return (
    <div className={`w-[1920px] h-[1080px] overflow-hidden bg-[#1a1a1a] ${F}`}>
      <TopBar />
      <div className="h-[899px] flex">
        <div className="ml-[9px] w-[1506px] h-[899px] bg-[#f0eff2] flex flex-col">
          <TitleBar />
          <TabsRow />
          <Ribbon />
          <div className="h-[722px] flex">
            <ThumbPane />
            <Centre />
            <FormatPane />
          </div>
          <StatusBar />
        </div>
        <div className="w-[26px] pr-[6px] flex items-start justify-center pt-[429px] gap-[2px]">
          <div className="w-px h-[40px] bg-[#888]" />
          <div className="w-px h-[40px] bg-[#888]" />
        </div>
        <Panel />
      </div>
      <Toolbar />
    </div>
  );
}
